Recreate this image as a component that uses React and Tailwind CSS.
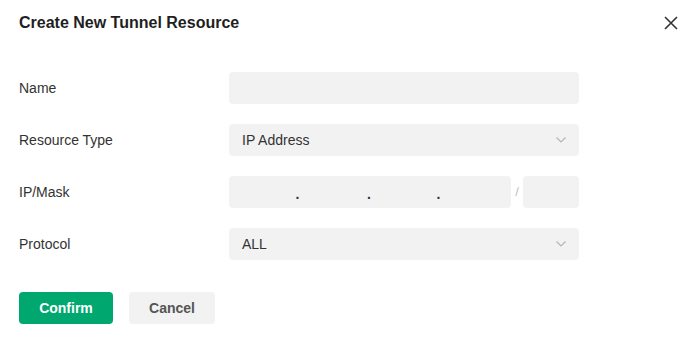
import React from 'react';

const Chevron = () => (
  <svg width="10" height="6" viewBox="0 0 10 6" fill="none" className="text-[#b5b5b5]">
    <path d="M0.5 0.5L5 5L9.5 0.5" stroke="currentColor" strokeWidth="1.2" />
  </svg>
);

const Row = ({ label, children }) => (
  <div className="flex items-center h-8">
    <div className="w-[210px] shrink-0 text-[14px] text-[#333]">{label}</div>
    {children}
  </div>
);

export default function App() {
  return (
    <div className="w-[690px] h-[351px] bg-white font-['Liberation_Sans',Arial,sans-serif] relative">
      <div className="flex items-center justify-between pl-[19px] pr-[10px] pt-[12px] h-[34px]">
        <h1 className="text-[16px] font-bold text-[#1f1f1f] leading-none">Create New Tunnel Resource</h1>
        <button className="w-[18px] h-[18px] flex items-center justify-center text-[#333]">
          <svg width="14" height="14" viewBox="0 0 14 14" fill="none">
            <path d="M1 1L13 13M13 1L1 13" stroke="currentColor" strokeWidth="1.6" />
          </svg>
        </button>
      </div>

      <div className="flex flex-col gap-5 pl-[19px] pt-[38px]">
        <Row label="Name">
          <div className="w-[350px] h-8 rounded bg-[#f2f2f2]" />
        </Row>
        <Row label="Resource Type">
          <div className="w-[350px] h-8 rounded bg-[#f2f2f2] flex items-center justify-between pl-[13px] pr-[13px] text-[14px] text-[#333]">
            <span>IP Address</span>
            <Chevron />
          </div>
        </Row>
        <Row label="IP/Mask">
          <div className="w-[282px] h-8 rounded bg-[#f2f2f2] grid grid-cols-4 text-[14px] font-bold text-[#333]">
            <span />
            <span className="relative"><span className="absolute -left-[4px] top-[8px]">.</span></span>
            <span className="relative"><span className="absolute -left-[3px] top-[8px]">.</span></span>
            <span className="relative"><span className="absolute -left-[4px] top-[8px]">.</span></span>
          </div>
          <span className="w-3 text-center text-[13px] text-[#c0c0c0]">/</span>
          <div className="w-[56px] h-8 rounded bg-[#f2f2f2]" />
        </Row>
        <Row label="Protocol">
          <div className="w-[350px] h-8 rounded bg-[#f2f2f2] flex items-center justify-between pl-[13px] pr-[13px] text-[14px] text-[#333]">
            <span>ALL</span>
            <Chevron />
          </div>
        </Row>
      </div>

      <div className="flex gap-4 pl-[19px] pt-8">
        <button className="w-[94px] h-8 rounded bg-[#00a870] text-white text-[14px] font-bold">Confirm</button>
        <button className="w-[86px] h-8 rounded bg-[#f2f2f2] text-[#555] text-[14px] font-bold">Cancel</button>
      </div>
    </div>
  );
}
